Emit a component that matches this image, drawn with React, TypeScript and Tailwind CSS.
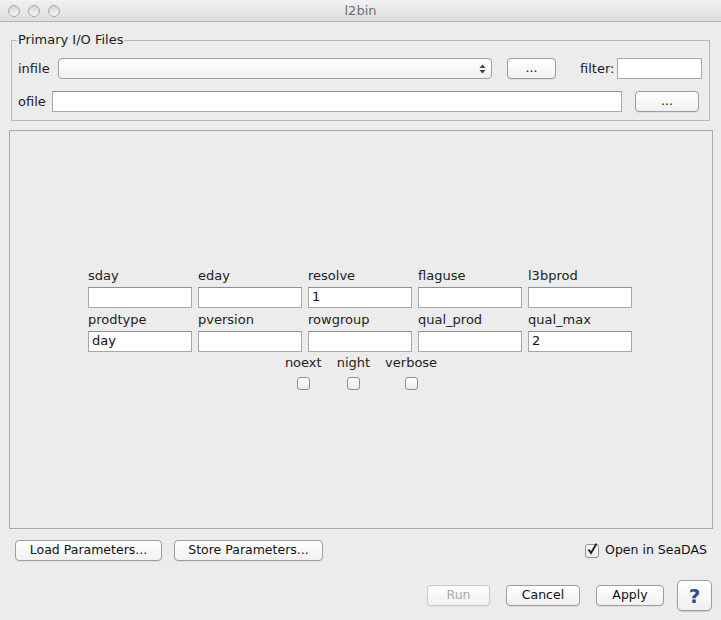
import React from "react";

const font = { fontFamily: '"DejaVu Sans", "Liberation Sans", sans-serif' };

function Light() {
  return (
    <span className="block h-[12px] w-[12px] rounded-full border border-[#a9a9a9] bg-gradient-to-b from-[#d6d6d6] to-[#f4f4f4]" />
  );
}

function Btn({ label, w, disabled }: { label: string; w: string; disabled?: boolean }) {
  return (
    <button
      className={`flex h-[21px] ${w} items-center justify-center rounded-[4px] border bg-gradient-to-b from-white to-[#f1f1f1] text-[12.5px] leading-none shadow-[0_1px_0_rgba(0,0,0,0.05)] ${
        disabled ? "border-[#c9c9c9] text-[#a8a8a8]" : "border-[#9d9d9d] text-[#111]"
      }`}
    >
      {label}
    </button>
  );
}

function Field({ label, value }: { label: string; value?: string }) {
  return (
    <div className="flex w-[104px] flex-col">
      <div className="h-[16px] text-[13px] leading-[16px] text-[#222]">{label}</div>
      <div className="mt-[3px] flex h-[21px] items-center border border-[#a7a7a7] border-t-[#8e8e8e] bg-white px-[3px] text-[13px] text-[#111]">
        {value}
      </div>
    </div>
  );
}

function Check({ label }: { label: string }) {
  return (
    <div className="flex flex-col items-center">
      <div className="h-[16px] text-[13px] leading-[16px] text-[#222]">{label}</div>
      <div className="mt-[6px] h-[13px] w-[13px] rounded-[3px] border border-[#8f8f8f] bg-gradient-to-b from-white to-[#ececec]" />
    </div>
  );
}

export default function App() {
  return (
    <div className="flex h-[620px] w-[721px] flex-col overflow-hidden bg-[#ececec] text-[#1a1a1a]" style={font}>
      {/* title bar */}
      <div className="relative flex h-[22px] items-center border-b border-[#b4b4b4] bg-gradient-to-b from-[#f2f2f2] to-[#dcdcdc]">
        <div className="flex gap-[8px] pl-[8px]">
          <Light />
          <Light />
          <Light />
        </div>
        <div className="absolute inset-x-0 text-center text-[13px] text-[#6f6f6f]">l2bin</div>
      </div>

      {/* Primary I/O Files */}
      <fieldset className="ml-[11px] mt-[10px] w-[699px] border border-[#b9b9b9] px-[6px] pb-[8px]">
        <legend className="-ml-[1px] px-[1px] text-[13px] leading-[16px] text-[#222]">Primary I/O Files</legend>
        <div className="mt-[10px] flex h-[21px] items-center">
          <span className="w-[40px] text-[13px]">infile</span>
          <div className="flex h-[21px] w-[434px] items-center justify-end rounded-[4px] border border-[#a0a0a0] bg-gradient-to-b from-white to-[#f0f0f0] pr-[5px]">
            <svg width="7" height="10" viewBox="0 0 7 10">
              <path d="M3.5 0.5 L6.5 4 L0.5 4 Z" fill="#444" />
              <path d="M3.5 9.5 L6.5 6 L0.5 6 Z" fill="#444" />
            </svg>
          </div>
          <div className="ml-[15px]">
            <Btn label="..." w="w-[49px]" />
          </div>
          <span className="ml-[24px] text-[13px]">filter:</span>
          <div className="ml-[3px] h-[21px] w-[85px] border border-[#a7a7a7] bg-white" />
        </div>
        <div className="mt-[12px] flex h-[21px] items-center">
          <span className="w-[34px] text-[13px]">ofile</span>
          <div className="h-[21px] w-[570px] border border-[#a7a7a7] border-t-[#8e8e8e] bg-white" />
          <div className="ml-[13px]">
            <Btn label="..." w="w-[64px]" />
          </div>
        </div>
      </fieldset>

      {/* parameter panel */}
      <div className="ml-[9px] mt-[9px] flex h-[399px] w-[704px] flex-col items-center justify-center border border-[#a9a9a9] pb-[2px] pr-[2px]">
        <div className="flex flex-col">
          <div className="flex gap-[6px]">
            <Field label="sday" />
            <Field label="eday" />
            <Field label="resolve" value="1" />
            <Field label="flaguse" />
            <Field label="l3bprod" />
          </div>
          <div className="mt-[4px] flex gap-[6px]">
            <Field label="prodtype" value="day" />
            <Field label="pversion" />
            <Field label="rowgroup" />
            <Field label="qual_prod" />
            <Field label="qual_max" value="2" />
          </div>
          <div className="mt-[3px] flex justify-center gap-[15px] pl-[2px]">
            <Check label="noext" />
            <Check label="night" />
            <Check label="verbose" />
          </div>
        </div>
      </div>

      {/* bottom */}
      <div className="mt-[11px] flex items-center pl-[15px] pr-[14px]">
        <Btn label="Load Parameters..." w="w-[147px]" />
        <div className="ml-[12px]">
          <Btn label="Store Parameters..." w="w-[149px]" />
        </div>
        <div className="ml-auto flex items-center gap-[6px]">
          <div className="flex h-[14px] w-[14px] items-center justify-center rounded-[3px] border border-[#8f8f8f] bg-gradient-to-b from-white to-[#ececec]">
            <svg width="12" height="12" viewBox="0 0 12 12" className="-mt-[3px]">
              <path d="M2.5 6.5 L5 10 L10.5 0.8" fill="none" stroke="#222" strokeWidth="2" />
            </svg>
          </div>
          <span className="text-[12.5px] text-[#111]">Open in SeaDAS</span>
        </div>
      </div>

      <div className="mt-[19px] flex items-center justify-end pr-[9px]">
        <Btn label="Run" w="w-[63px]" disabled />
        <div className="ml-[16px]">
          <Btn label="Cancel" w="w-[74px]" />
        </div>
        <div className="ml-[16px]">
          <Btn label="Apply" w="w-[68px]" />
        </div>
        <button className="ml-[13px] flex h-[31px] w-[35px] items-center justify-center rounded-[5px] border border-[#9d9d9d] bg-gradient-to-b from-white to-[#f0f0f0] text-[20px] font-bold text-[#2e4f8f] shadow-[0_1px_1px_rgba(0,0,0,0.15)]">
          ?
        </button>
      </div>
    </div>
  );
}
